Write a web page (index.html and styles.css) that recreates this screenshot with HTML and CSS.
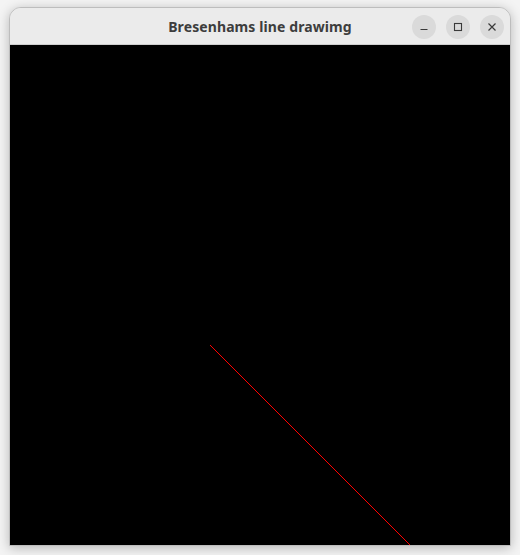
FILE: index.html
```html
<!DOCTYPE html>
<html>
<head>
<meta charset="utf-8">
<link rel="stylesheet" href="styles.css">
</head>
<body>
<div class="window">
  <div class="titlebar">
    <div class="title">Bresenhams line drawimg</div>
    <div class="buttons">
      <div class="btn"><svg width="10" height="10" viewBox="0 0 10 10"><path d="M1.5 7.5 H8.5" stroke="#3a3a3a" stroke-width="1.1"/></svg></div>
      <div class="btn"><svg width="10" height="10" viewBox="0 0 10 10"><rect x="1.5" y="1.5" width="7" height="7" fill="none" stroke="#3a3a3a" stroke-width="1.1"/></svg></div>
      <div class="btn"><svg width="10" height="10" viewBox="0 0 10 10"><path d="M1.5 1.5 L8.5 8.5 M8.5 1.5 L1.5 8.5" stroke="#3a3a3a" stroke-width="1.2"/></svg></div>
    </div>
  </div>
  <canvas class="canvas" id="c" width="500" height="500"></canvas>
</div>
<script src="script.js"></script>
</body>
</html>
```
FILE: styles.css
```css
html, body {
  margin: 0;
  padding: 0;
  background: #f4f4f4;
  width: 520px;
  height: 555px;
  overflow: hidden;
}
body {
  padding-top: 7px;
  padding-left: 9px;
  box-sizing: border-box;
}
.window {
  width: 500px;
  border: 1px solid #bdbdbd;
  border-radius: 12px 12px 0 0;
  overflow: hidden;
  box-shadow: 0 2px 12px rgba(0,0,0,0.25);
  background: #ebebeb;
}
.titlebar {
  height: 36px;
  background: #ebebeb;
  border-bottom: 1px solid #cfcfcf;
  position: relative;
  display: flex;
  align-items: center;
  justify-content: center;
}
.title {
  font-family: "Noto Sans", "DejaVu Sans", sans-serif;
  font-weight: bold;
  font-size: 14px;
  color: #3d3d3d;
  letter-spacing: 0.1px;
}
.buttons {
  position: absolute;
  right: 6px;
  top: 7px;
  display: flex;
  gap: 10px;
}
.btn {
  width: 24px;
  height: 24px;
  border-radius: 50%;
  background: #dadada;
  display: flex;
  align-items: center;
  justify-content: center;
}
.canvas {
  display: block;
  width: 500px;
  height: 500px;
  background: #000;
}
```
FILE: script.js
```js
(function () {
  var c = document.getElementById('c');
  var ctx = c.getContext('2d');
  ctx.fillStyle = '#000';
  ctx.fillRect(0, 0, 500, 500);
  ctx.fillStyle = '#ff0000';
  function line(x0, y0, x1, y1) {
    var dx = Math.abs(x1 - x0), dy = Math.abs(y1 - y0);
    var sx = x0 < x1 ? 1 : -1, sy = y0 < y1 ? 1 : -1;
    var err = dx - dy;
    while (true) {
      ctx.fillRect(x0, y0, 1, 1);
      if (x0 === x1 && y0 === y1) break;
      var e2 = 2 * err;
      if (e2 > -dy) { err -= dy; x0 += sx; }
      if (e2 < dx) { err += dx; y0 += sy; }
    }
  }
  line(200, 300, 400, 500);
})();
```
